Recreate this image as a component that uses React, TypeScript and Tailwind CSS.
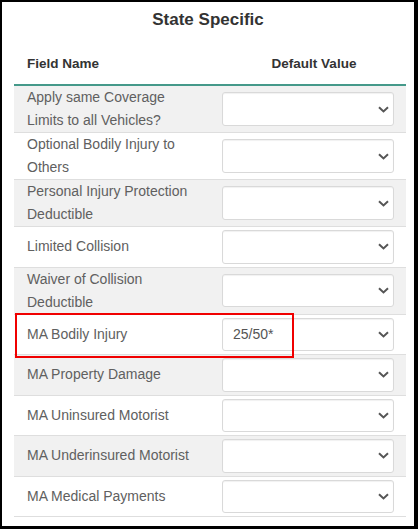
import React from "react";

const rows: { label: string; value?: string; highlight?: boolean }[] = [
  { label: "Apply same Coverage Limits to all Vehicles?" },
  { label: "Optional Bodily Injury to Others" },
  { label: "Personal Injury Protection Deductible" },
  { label: "Limited Collision" },
  { label: "Waiver of Collision Deductible" },
  { label: "MA Bodily Injury", value: "25/50*", highlight: true },
  { label: "MA Property Damage" },
  { label: "MA Uninsured Motorist" },
  { label: "MA Underinsured Motorist" },
  { label: "MA Medical Payments" },
];

function Chevron() {
  return (
    <svg width="11" height="7" viewBox="0 0 11 7" className="shrink-0">
      <path d="M1 1.2 L5.5 5.4 L10 1.2" fill="none" stroke="#555" strokeWidth="2" strokeLinejoin="miter" />
    </svg>
  );
}

export default function App() {
  return (
    <div
      className="w-[418px] h-[529px] bg-white border-l-2 border-t-2 border-r-4 border-b-[3px] border-black overflow-hidden"
      style={{ fontFamily: '"Liberation Sans", Arial, sans-serif' }}
    >
      <div className="pt-[6px] text-center text-[17px] leading-[24px] font-bold text-[#333]">State Specific</div>
      <div className="ml-[12px] w-[392px] mt-[22px]">
        <div className="flex h-[30px] text-[13.5px] font-bold text-[#333] leading-[20px]">
          <div className="w-[200px] pl-[13px]">Field Name</div>
          <div className="w-[192px] pl-2 text-center">Default Value</div>
        </div>
        <div className="h-[2px] bg-[#45998a]" />
        {rows.map((r, i) => (
          <div
            key={i}
            className={`relative flex items-center border-b border-[#dedede] ${i % 2 === 0 ? "bg-[#f1f1f1]" : "bg-white"}`}
          >
            <div className="w-[200px] pl-[13px] pr-[25px] text-[14px] leading-[23px] text-[#606060]">{r.label}</div>
            <div className="w-[192px] pl-2 pr-3 py-[3px]">
              <div className="h-[33.5px] flex items-center justify-between bg-white border border-[#d9d9d9] rounded-[3px] shadow-[inset_0_1px_1px_rgba(0,0,0,0.06)] pl-[10px] pr-[4px]">
                <span className="text-[14px] text-[#555]">{r.value ?? ""}</span>
                <Chevron />
              </div>
            </div>
            {r.highlight && (
              <div className="absolute z-10 left-[1px] top-[-2px] w-[279px] h-[45px] border-2 border-[#f00000] pointer-events-none" />
            )}
          </div>
        ))}
      </div>
    </div>
  );
}
